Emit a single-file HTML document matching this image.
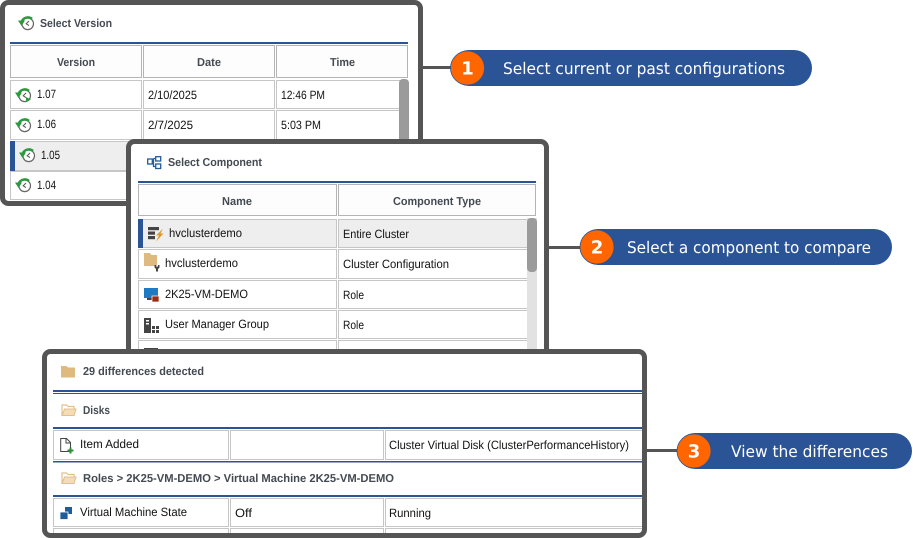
<!DOCTYPE html>
<html><head><meta charset="utf-8"><style>
html,body{margin:0;padding:0;background:#fff;width:913px;height:538px;overflow:hidden}
svg{display:block}
text{font-family:"Liberation Sans",sans-serif;font-size:12px;fill:#111;text-rendering:geometricPrecision}
.h{font-weight:bold;fill:#444a52;font-size:11.5px}
.p{font-family:"DejaVu Sans",sans-serif;font-size:16px;fill:#fff}
.n{font-family:"DejaVu Sans",sans-serif;font-size:18px;font-weight:bold;fill:#fff}
.c{fill:#fff;stroke:#c6c6c6;stroke-width:1}
.ch{fill:#fdfdfd;stroke:#b4b4b4;stroke-width:1}
.panel{fill:#fff;stroke:#555;stroke-width:5}
.frame{fill:none;stroke:#555;stroke-width:5}
</style></head><body>
<svg width="913" height="538" viewBox="0 0 913 538" xmlns="http://www.w3.org/2000/svg">
<defs>
<symbol id="clk" width="16" height="15" viewBox="0 0 16 15" overflow="visible">
<circle cx="9.700" cy="7.800" r="5.800" fill="#fff" stroke="#666" stroke-width="1.200"/>
<path d="M14 2.900A6.600 6.600 0 0 0 4 4.800" fill="none" stroke="#2b9a3c" stroke-width="2.400"/>
<path d="M0 4.500H7L3.500 10Z" fill="#2b9a3c"/>
<path d="M11 5L8.200 7.800L11 9.600" fill="none" stroke="#555" stroke-width="1"/>
</symbol>
<symbol id="fold" width="15" height="13" viewBox="0 0 15 13" overflow="visible">
<path d="M0 1H5.500L7 2.500H14V12.500H0Z" fill="#dfba7f"/>
</symbol>
<symbol id="ofold" width="15" height="13" viewBox="0 0 15 13" overflow="visible">
<path d="M.5 11.500V1H5L6.500 2.500H12.500V5" fill="#fff" stroke="#e2c08c" stroke-width="1.200"/>
<path d="M.5 11.500L3 5H14.500L12.500 11.500Z" fill="#f3dcb6" stroke="#e2c08c" stroke-width="1.100"/>
</symbol>
<clipPath id="c3"><rect x="47" y="354" width="595" height="179"/></clipPath>
</defs>

<!-- connectors -->
<rect x="420" y="66" width="32" height="3" fill="#555"/>
<rect x="547" y="246" width="35" height="3" fill="#555"/>
<rect x="645" y="449" width="34" height="3" fill="#555"/>

<!-- panel 1 -->
<rect class="panel" x="2.500" y="2.500" width="418" height="201" rx="6"/>
<use href="#clk" x="18" y="16"/>
<text class="h" x="40" y="27" textLength="72" lengthAdjust="spacingAndGlyphs">Select Version</text>
<rect x="10" y="42" width="398" height="2" fill="#2a5496"/>
<rect class="ch" x="10.500" y="45.500" width="131" height="32"/>
<rect class="ch" x="143.500" y="45.500" width="131" height="32"/>
<rect class="ch" x="276.500" y="45.500" width="131" height="32"/>
<text class="h" x="57" y="66" textLength="38" lengthAdjust="spacingAndGlyphs">Version</text>
<text class="h" x="197" y="66" textLength="24" lengthAdjust="spacingAndGlyphs">Date</text>
<text class="h" x="330" y="66" textLength="25" lengthAdjust="spacingAndGlyphs">Time</text>
<rect class="c" x="10.500" y="80.500" width="131" height="28"/><rect class="c" x="143.500" y="80.500" width="131" height="28"/><rect class="c" x="276.500" y="80.500" width="131" height="28"/>
<rect class="c" x="10.500" y="110.500" width="131" height="29"/><rect class="c" x="143.500" y="110.500" width="131" height="29"/><rect class="c" x="276.500" y="110.500" width="131" height="29"/>
<rect x="10.500" y="141.500" width="131" height="29" fill="#eeeeee" stroke="#c6c6c6"/>
<rect x="10" y="141" width="5" height="30" fill="#2a5496"/>
<rect class="c" x="10.500" y="171.500" width="131" height="28"/>
<rect x="399" y="79" width="10" height="70" rx="4" fill="#9b9b9b"/>
<use href="#clk" x="15" y="88"/>
<path d="M26 97L31 99.500L26 102Z" fill="#2b9a3c"/>
<use href="#clk" x="15" y="118"/>
<use href="#clk" x="19" y="148"/>
<use href="#clk" x="15" y="178"/>
<text x="37" y="98" textLength="19" lengthAdjust="spacingAndGlyphs">1.07</text>
<text x="148" y="99" textLength="49" lengthAdjust="spacingAndGlyphs">2/10/2025</text>
<text x="281" y="99" textLength="44" lengthAdjust="spacingAndGlyphs">12:46 PM</text>
<text x="37" y="128" textLength="19" lengthAdjust="spacingAndGlyphs">1.06</text>
<text x="148" y="129" textLength="45" lengthAdjust="spacingAndGlyphs">2/7/2025</text>
<text x="281" y="129" textLength="40" lengthAdjust="spacingAndGlyphs">5:03 PM</text>
<text x="41" y="159" textLength="19" lengthAdjust="spacingAndGlyphs">1.05</text>
<text x="37" y="189" textLength="19" lengthAdjust="spacingAndGlyphs">1.04</text>

<!-- panel 2 -->
<rect class="panel" x="128.500" y="141.500" width="418" height="240" rx="6"/>
<g fill="#fff" stroke="#1f5c99" stroke-width="1.300">
<path d="M152 161.500H153.500M153.500 158.500V166.500H155M153.500 158.500H155" fill="none"/>
<rect x="147.700" y="159" width="4.600" height="5"/><rect x="155.700" y="156.700" width="5" height="4.300"/><rect x="155.700" y="164" width="5" height="4.500"/>
</g>
<text class="h" x="168" y="166" textLength="94" lengthAdjust="spacingAndGlyphs">Select Component</text>
<rect x="138" y="181" width="398" height="2" fill="#2a5496"/>
<rect class="ch" x="138.500" y="184.500" width="198" height="31"/><rect class="ch" x="338.500" y="184.500" width="197" height="31"/>
<text class="h" x="222" y="205" textLength="30" lengthAdjust="spacingAndGlyphs">Name</text>
<text class="h" x="393" y="205" textLength="88" lengthAdjust="spacingAndGlyphs">Component Type</text>
<rect x="138.500" y="219.500" width="198" height="28" fill="#eee" stroke="#c6c6c6"/><rect x="338.500" y="219.500" width="189" height="28" fill="#eee" stroke="#c6c6c6"/>
<rect x="138" y="219" width="5" height="29" fill="#2a5496"/>
<rect class="c" x="138.500" y="249.500" width="198" height="29"/><rect class="c" x="338.500" y="249.500" width="197" height="29"/>
<rect class="c" x="138.500" y="280.500" width="198" height="28"/><rect class="c" x="338.500" y="280.500" width="197" height="28"/>
<rect class="c" x="138.500" y="310.500" width="198" height="28"/><rect class="c" x="338.500" y="310.500" width="197" height="28"/>
<rect class="c" x="138.500" y="340.500" width="198" height="20"/><rect class="c" x="338.500" y="340.500" width="197" height="20"/>
<rect x="527" y="218" width="10" height="132" fill="#e2e2e2"/>
<rect x="527" y="218" width="10" height="54" rx="4" fill="#9b9b9b"/>
<!-- row icons -->
<g fill="#444"><rect x="148" y="227" width="11" height="3.200"/><rect x="148" y="231.500" width="7" height="3.200"/><rect x="148" y="236" width="7" height="3.200"/></g>
<path d="M163 228.500L156 235.500H159L156 241.500L163.500 233.500H160.500L163 228.500Z" fill="#e0962a"/>
<path d="M144 253H150L151.500 255H157V266H144Z" fill="#dfba7f"/>
<path d="M154.500 265H156V266.500H158V265H159.500V267.500L158 269V271.500H156V269L154.500 267.500Z" fill="#444"/>
<rect x="144" y="288" width="14" height="10" fill="#1f7ac4"/><rect x="147" y="298" width="6" height="2" fill="#444"/><rect x="152" y="296" width="7" height="6" fill="#a32a12" stroke="#fff" stroke-width=".7"/>
<path d="M144 318H151V333H144Z" fill="#444"/><rect x="146" y="320" width="3" height="1.500" fill="#fff"/><rect x="146" y="323" width="3" height="1.500" fill="#fff"/>
<rect x="152" y="326" width="3" height="3" fill="#444"/><rect x="156" y="326" width="3" height="3" fill="#444"/><rect x="152" y="330" width="3" height="3" fill="#444"/><rect x="156" y="330" width="3" height="3" fill="#444"/>
<rect x="144" y="348" width="14" height="4" fill="#444"/>
<text x="169" y="237" textLength="73" lengthAdjust="spacingAndGlyphs">hvclusterdemo</text>
<text x="343" y="238" textLength="66" lengthAdjust="spacingAndGlyphs">Entire Cluster</text>
<text x="165" y="267" textLength="73" lengthAdjust="spacingAndGlyphs">hvclusterdemo</text>
<text x="343" y="268" textLength="106" lengthAdjust="spacingAndGlyphs">Cluster Configuration</text>
<text x="165" y="298" textLength="83" lengthAdjust="spacingAndGlyphs">2K25-VM-DEMO</text>
<text x="343" y="299" textLength="21" lengthAdjust="spacingAndGlyphs">Role</text>
<text x="165" y="328" textLength="104" lengthAdjust="spacingAndGlyphs">User Manager Group</text>
<text x="343" y="329" textLength="21" lengthAdjust="spacingAndGlyphs">Role</text>

<!-- panel 3 -->
<rect x="44.500" y="351.500" width="600" height="184" rx="6" fill="#fff"/>
<g clip-path="url(#c3)">
<use href="#fold" x="61" y="365"/>
<text class="h" x="83" y="375" textLength="121" lengthAdjust="spacingAndGlyphs">29 differences detected</text>
<rect x="53" y="390" width="589" height="2" fill="#2a5496"/>
<rect x="53" y="393" width="589" height="1" fill="#2a5496"/>
<use href="#ofold" x="61.500" y="404"/>
<text class="h" x="83" y="414" textLength="27" lengthAdjust="spacingAndGlyphs">Disks</text>
<rect x="53" y="427" width="589" height="2" fill="#2a5496"/>
<rect class="c" x="53.500" y="430.500" width="175" height="29"/><rect class="c" x="230.500" y="430.500" width="153" height="29"/><rect class="c" x="385.500" y="430.500" width="260" height="29"/>
<rect x="53" y="461" width="589" height="1.500" fill="#2a5496"/>
<path d="M60.700 438.500H66.500L70.500 442.500V451.500H60.700Z M66 438.500V443H70.500" fill="#fff" stroke="#444" stroke-width="1"/>
<path d="M67.500 449.500H69.500V447.500H71.500V449.500H73.500V451.500H71.500V453.500H69.500V451.500H67.500Z" fill="#2b8f3a"/>
<text x="80" y="448" textLength="59" lengthAdjust="spacingAndGlyphs">Item Added</text>
<text x="389" y="449" textLength="240" lengthAdjust="spacingAndGlyphs">Cluster Virtual Disk (ClusterPerformanceHistory)</text>
<use href="#ofold" x="61.500" y="472"/>
<text class="h" x="83" y="482" textLength="311" lengthAdjust="spacingAndGlyphs">Roles &gt; 2K25-VM-DEMO &gt; Virtual Machine 2K25-VM-DEMO</text>
<rect x="53" y="495" width="589" height="2" fill="#2a5496"/>
<rect class="c" x="53.500" y="498.500" width="175" height="28"/><rect class="c" x="230.500" y="498.500" width="153" height="28"/><rect class="c" x="385.500" y="498.500" width="260" height="28"/>
<rect class="c" x="53.500" y="528.500" width="175" height="20"/><rect class="c" x="230.500" y="528.500" width="153" height="20"/><rect class="c" x="385.500" y="528.500" width="260" height="20"/>
<rect x="65" y="507" width="7" height="7" fill="#1f5c99"/>
<rect x="60" y="512" width="8" height="7.500" fill="#1f5c99" stroke="#fff" stroke-width=".8"/>
<text x="80" y="516" textLength="107" lengthAdjust="spacingAndGlyphs">Virtual Machine State</text>
<text x="235" y="517" textLength="17" lengthAdjust="spacingAndGlyphs">Off</text>
<text x="389" y="517" textLength="42" lengthAdjust="spacingAndGlyphs">Running</text>
</g>
<rect class="frame" x="44.500" y="351.500" width="600" height="184" rx="6"/>

<!-- pills -->
<rect x="451" y="50" width="361" height="36" rx="18" fill="#2a5496"/>
<circle cx="467.500" cy="68" r="17" fill="#ff6600" stroke="#2a5496" stroke-width=".8"/>
<text class="n" x="467.500" y="74.500" text-anchor="middle">1</text>
<text class="p" x="503" y="74" textLength="282" lengthAdjust="spacingAndGlyphs">Select current or past configurations</text>

<rect x="580" y="229" width="312" height="36" rx="18" fill="#2a5496"/>
<circle cx="597" cy="247" r="17" fill="#ff6600" stroke="#2a5496" stroke-width=".8"/>
<text class="n" x="597" y="253.500" text-anchor="middle">2</text>
<text class="p" x="627" y="253" textLength="244" lengthAdjust="spacingAndGlyphs">Select a component to compare</text>

<rect x="677" y="433" width="235" height="36" rx="18" fill="#2a5496"/>
<circle cx="694" cy="451" r="17" fill="#ff6600" stroke="#2a5496" stroke-width=".8"/>
<text class="n" x="694" y="457.500" text-anchor="middle">3</text>
<text class="p" x="731" y="457" textLength="157" lengthAdjust="spacingAndGlyphs">View the differences</text>
</svg>
</body></html>
